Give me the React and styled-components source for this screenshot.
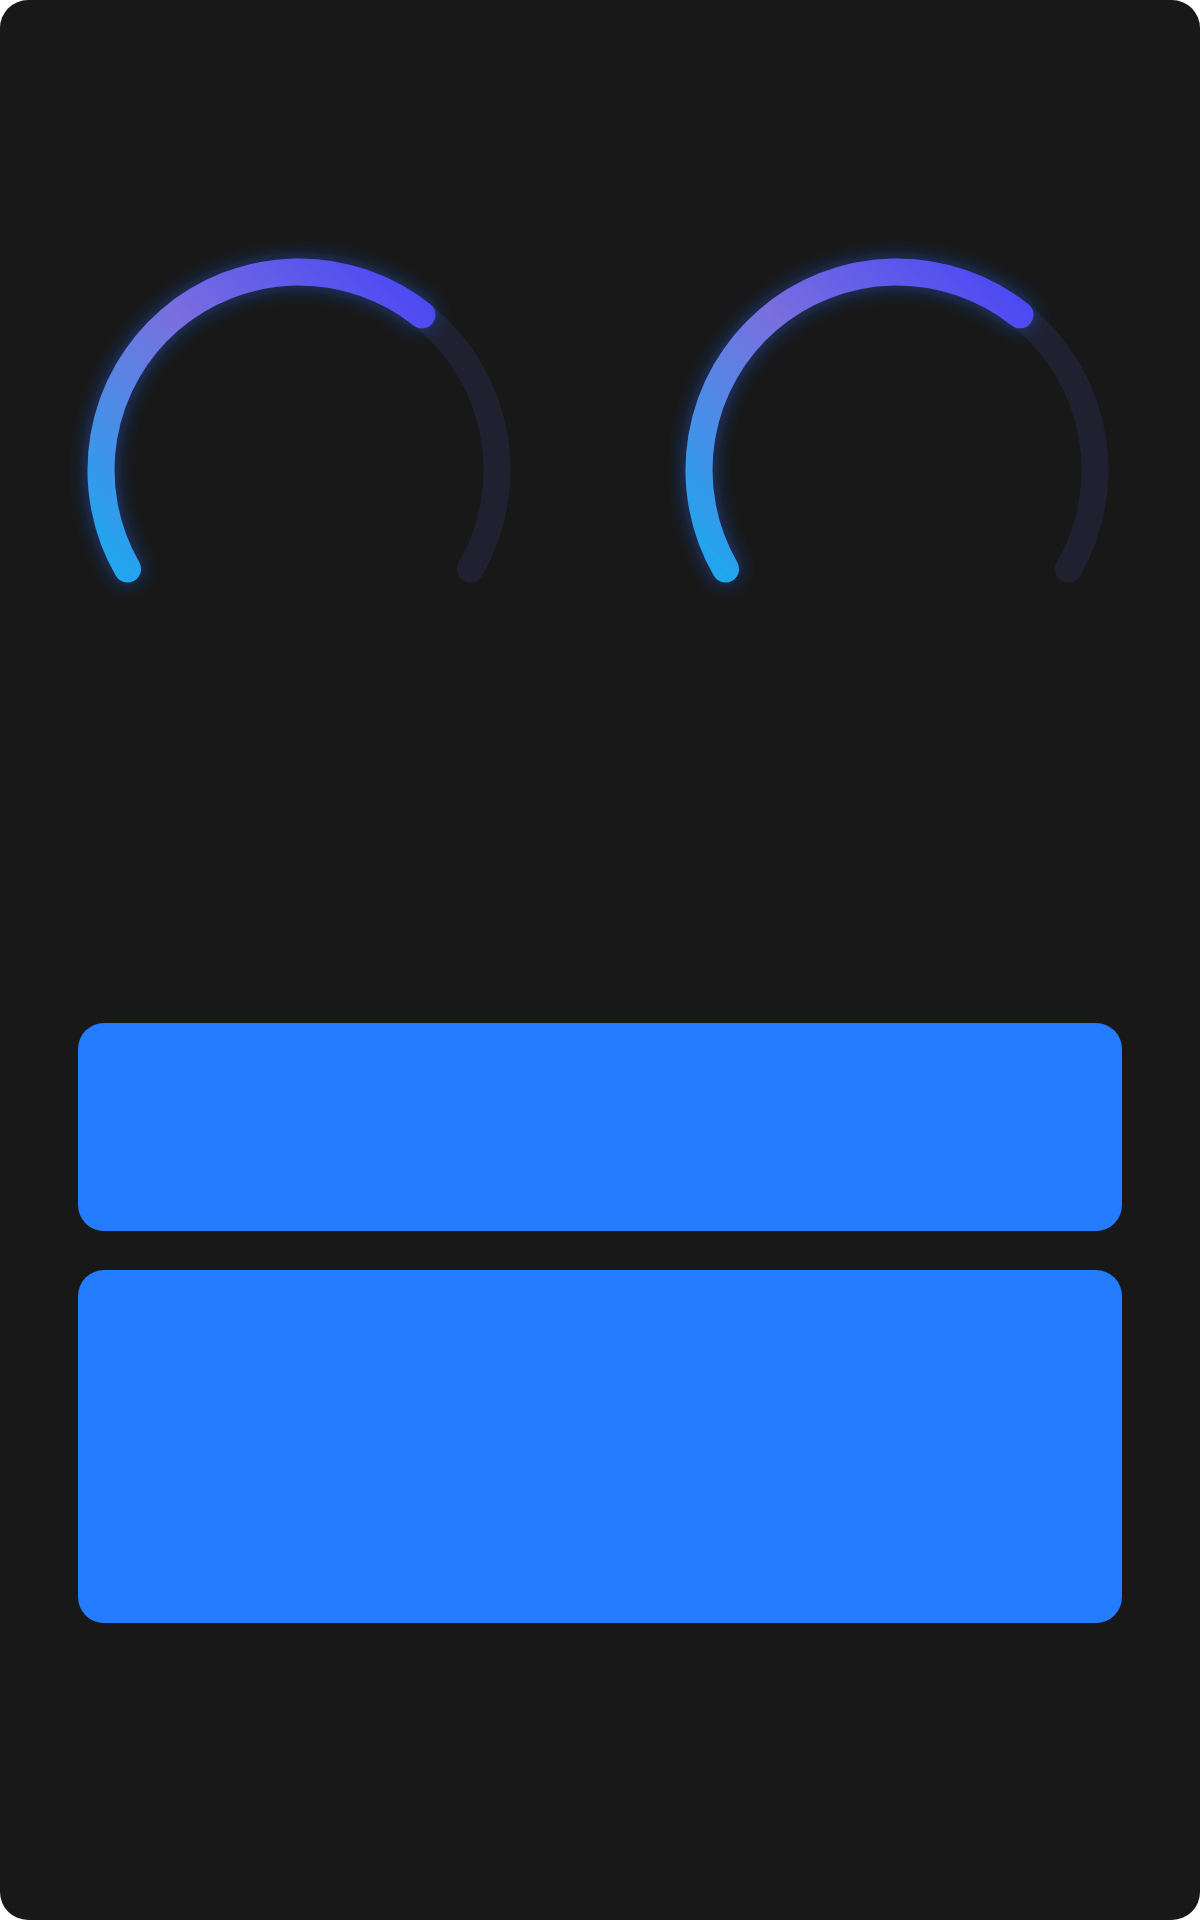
import React from 'react';
import styled, { createGlobalStyle } from 'styled-components';

const GlobalStyle = createGlobalStyle`
  html, body {
    margin: 0;
    padding: 0;
    background: #ffffff;
    font-family: Inter, "Liberation Sans", sans-serif;
  }
`;

const Card = styled.div`
  width: 1200px;
  height: 1920px;
  box-sizing: border-box;
  background-color: #181818;
  border-radius: 28px;
  padding: 249px 78px 0;
  display: flex;
  flex-direction: column;
`;

const GaugeRow = styled.div`
  display: flex;
  gap: 156px;
  height: 442px;
`;

const GaugeBox = styled.div`
  width: 442px;
  height: 442px;

  svg {
    display: block;
    overflow: visible;
  }
`;

const Panels = styled.div`
  margin-top: 332px;
  display: flex;
  flex-direction: column;
  gap: 39px;
`;

const Panel = styled.div`
  height: ${(p) => p.$h}px;
  background-color: #247cff;
  border-radius: 26px;
`;

const SIZE = 442;
const C = SIZE / 2;
const R = 198;
const STROKE = 27;
const SWEEP = 240;

const polar = (deg) => {
  const a = (deg * Math.PI) / 180;
  return [C + R * Math.sin(a), C - R * Math.cos(a)];
};

const arc = (from, to) => {
  const [x1, y1] = polar(from);
  const [x2, y2] = polar(to);
  const large = to - from > 180 ? 1 : 0;
  return `M ${x1.toFixed(2)} ${y1.toFixed(2)} A ${R} ${R} 0 ${large} 1 ${x2.toFixed(2)} ${y2.toFixed(2)}`;
};

const Gauge = ({ id, value }) => {
  const start = -SWEEP / 2;
  const end = start + (SWEEP * value) / 100;
  return (
    <GaugeBox>
      <svg width={SIZE} height={SIZE} viewBox={`0 0 ${SIZE} ${SIZE}`}>
        <defs>
          <linearGradient id={`grad-${id}`} gradientUnits="userSpaceOnUse" x1="9" y1="336" x2="355" y2="10">
            <stop offset="0" stopColor="#14aef0" />
            <stop offset="0.52" stopColor="#7a6fdf" />
            <stop offset="1" stopColor="#4343f6" />
          </linearGradient>
          <filter id={`glow-${id}`} x="-30%" y="-30%" width="160%" height="160%">
            <feGaussianBlur in="SourceAlpha" stdDeviation="10" result="blur" />
            <feFlood floodColor="#1f5fe6" floodOpacity="0.55" />
            <feComposite in2="blur" operator="in" result="glow" />
            <feMerge>
              <feMergeNode in="glow" />
              <feMergeNode in="SourceGraphic" />
            </feMerge>
          </filter>
        </defs>
        <path d={arc(start, -start)} fill="none" stroke="#202130" strokeWidth={STROKE} strokeLinecap="round" />
        <path
          d={arc(start, end)}
          fill="none"
          stroke={`url(#grad-${id})`}
          strokeWidth={STROKE}
          strokeLinecap="round"
          filter={`url(#glow-${id})`}
        />
      </svg>
    </GaugeBox>
  );
};

const gauges = [
  { id: 'a', value: 66 },
  { id: 'b', value: 66 },
];

export default function App() {
  return (
    <>
      <GlobalStyle />
      <Card>
        <GaugeRow>
          {gauges.map((g) => (
            <Gauge key={g.id} id={g.id} value={g.value} />
          ))}
        </GaugeRow>
        <Panels>
          <Panel $h={208} />
          <Panel $h={353} />
        </Panels>
      </Card>
    </>
  );
}
